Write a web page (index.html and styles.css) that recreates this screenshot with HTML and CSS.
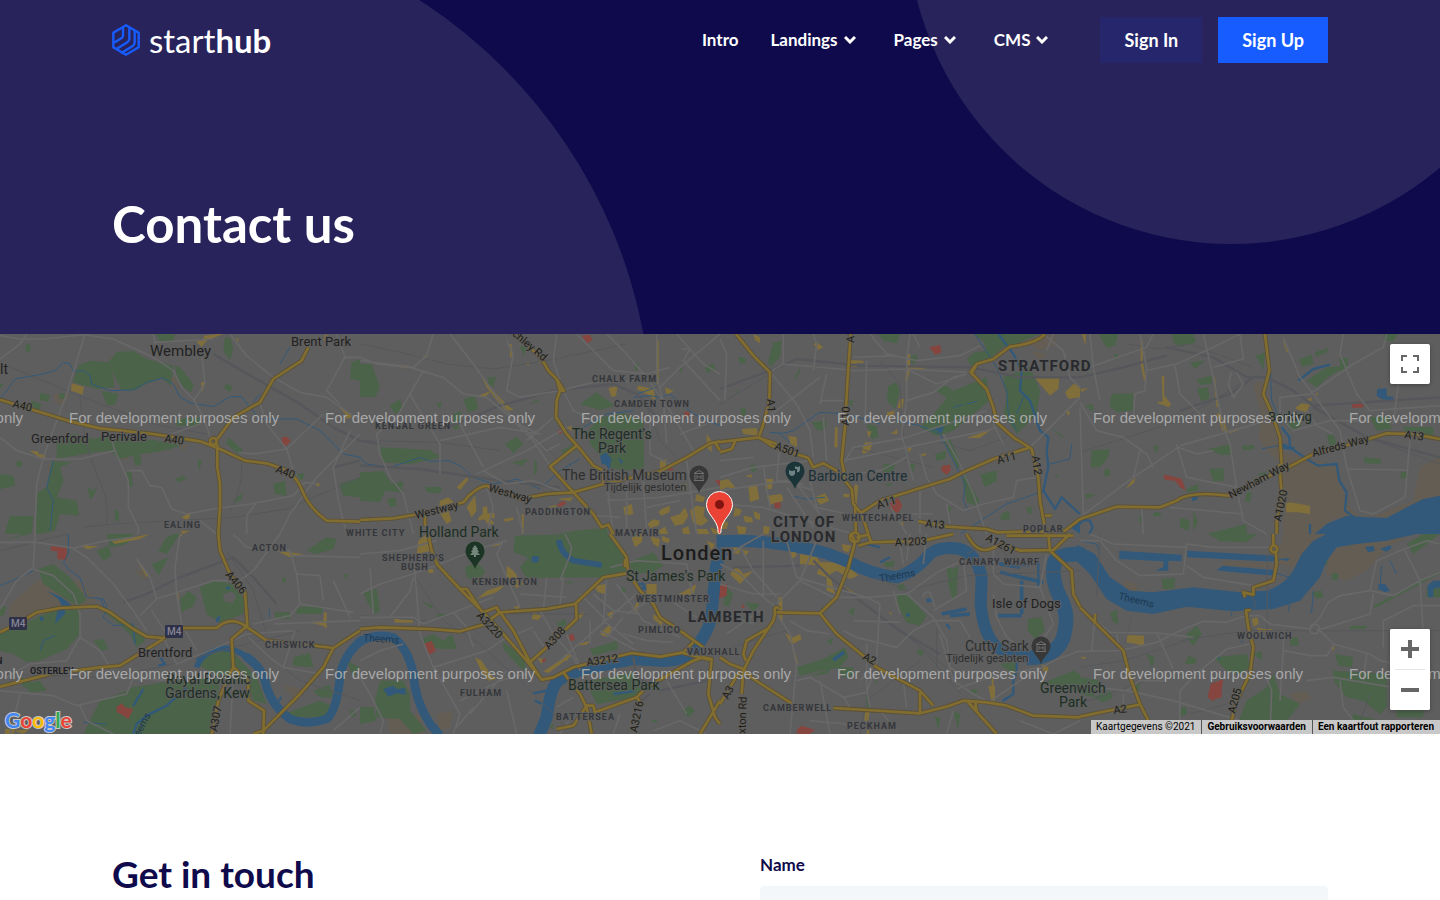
FILE: index.html
```html
<!DOCTYPE html>
<html lang="en">
<head>
    <meta charset="UTF-8">
    <meta name="viewport" content="width=device-width, initial-scale=1.0">
    <title>Contact us - Starthub</title>
    <link rel="stylesheet" href="styles.css">
</head>
<body>
    <div class="hero">
        <svg class="hero-shapes" viewBox="0 0 1440 334" preserveAspectRatio="xMidYMin slice" aria-hidden="true">
            <circle cx="144" cy="427" r="508"/>
            <circle cx="1231" cy="-80" r="324"/>
        </svg>
        <header class="container navbar">
            <a class="logo" href="#">
                <svg width="28" height="32" viewBox="0 0 84 96" fill="none" stroke="#175cff" stroke-width="7" aria-hidden="true">
                    <path d="M42 4 L80 26 V70 L42 92 L4 70 V26Z"/>
                    <path d="M33 8 V35 Q33 39 29 42 L6 56 M52 8 V44 Q52 51 46 55 L12 76 M68 18 V56 Q68 62 62 66 L27 88"/>
                </svg>
                <span class="logo-text">start<b>hub</b></span>
            </a>
            <nav>
                <a href="#">Intro</a>
                <a href="#">Landings <svg class="chevron" viewBox="0 0 12 8" aria-hidden="true"><path d="M1 1 L6 6 L11 1"/></svg></a>
                <a href="#">Pages <svg class="chevron" viewBox="0 0 12 8" aria-hidden="true"><path d="M1 1 L6 6 L11 1"/></svg></a>
                <a href="#">CMS <svg class="chevron" viewBox="0 0 12 8" aria-hidden="true"><path d="M1 1 L6 6 L11 1"/></svg></a>
            </nav>
            <div class="actions">
                <a class="btn" href="#">Sign In</a>
                <a class="btn btn-primary" href="#">Sign Up</a>
            </div>
        </header>
        <div class="container title">
            <h1>Contact us</h1>
        </div>
    </div>

    <section class="map">
        <svg class="map-canvas" viewBox="0 0 1440 400" preserveAspectRatio="xMidYMid slice">
            <defs>
                <!-- main roads, drawn twice: casing and then fill -->
                <g id="main-roads" transform="scale(.33333)">
                    <path d="M0 197 L90 225 L210 262 L300 283 L460 300 L600 322 L660 345 L735 380 L800 388 L850 405 Q885 420 905 465 Q925 520 980 560 L1080 563 M925 40 L905 80 L820 135 L780 205 L700 250 L652 315 M652 330 L652 400 L660 450 L660 520 L655 600 M630 322 a10 10 0 1 0 20 0 a10 10 0 1 0 -20 0"/>
                    <path transform="translate(1080 0)" d="M450 -20 L545 75 L565 110 L590 135 L600 170 L590 200 L588 250 L620 300 L660 345 L700 395 L730 410 V450 L640 475 L560 480 L480 495 L380 455 Q345 460 310 505 L180 540 L100 553 L0 558 M650 335 L570 398 L640 475 L700 540 L725 580 L745 572 L760 600 M590 135 L612 170 H600 M730 450 L900 412 L980 370 L1050 328 L1080 322 M195 545 V575 M1065 325 L1080 350"/>
                    <path transform="translate(2160 0)" d="M48 0 L100 65 L150 115 L148 200 L130 270 L118 305 M0 324 L118 310 L155 335 L265 372 L280 400 L310 388 L350 410 L395 465 L400 510 L425 540 L445 600 M118 312 L170 330 M392 0 L382 150 L375 280 L365 380 L375 430 M405 510 L408 600 M425 535 L480 500 L640 450 L690 435 L740 410 L820 375 L925 342 M975 0 Q950 28 870 38 L820 75 L770 90 L755 118 L800 165 L820 220 L830 265 L880 310 L935 345 L955 430 L960 500 L978 600 M750 118 L765 95 M595 562 L680 578 L800 585 L830 595 L1035 590 L1080 555 M0 355 L35 345 L45 322 M975 545 H995"/>
                    <path transform="translate(3240 0)" d="M555 0 L568 110 L550 180 L580 250 L600 310 L605 390 L615 405 L700 360 L850 320 L920 298 L1000 300 L1080 315 M0 555 L110 518 L240 520 L290 500 Q330 470 445 485 L560 430 L615 400 M598 390 L605 480 L590 560 V600"/>
                    <path transform="translate(0 600)" d="M0 295 L60 265 L110 235 L180 222 L290 217 L330 235 L400 285 L440 308 L490 312 L550 282 H650 Q690 245 735 275 L800 320 L900 330 L1000 342 L1080 290 M0 458 L160 418 L300 400 L360 395 L400 370 L490 315 M655 0 L660 50 L690 120 L735 175 L742 275 L695 315 L700 400 L745 440 V500 L792 530 L790 600 M700 400 L680 440 L655 500 L635 600 M1000 342 L970 400 L900 480 L790 590 L760 600"/>
                    <path transform="translate(1080 600)" d="M205 0 L215 50 L232 92 L300 165 L370 235 L410 220 L420 240 M300 165 L320 165 L365 232 M0 285 L60 280 L210 285 L300 292 L370 272 L420 235 L560 225 L645 210 L730 130 L800 118 M420 235 L460 290 L510 385 L545 437 M370 235 L430 300 L500 380 L545 437 L580 430 L640 400 L740 375 L815 357 L900 368 L970 355 L1000 325 M510 385 L560 340 L650 255 L648 210 M750 0 L800 70 L805 118 L840 170 L880 210 L900 250 L960 290 L1030 340 M795 100 V75 M610 415 L660 480 L680 520 L695 600 M590 585 L640 575 L680 515 H700 L705 535 L830 490 L860 460 L1000 380 L1030 370 L1055 375 L1045 480 L1065 550 L1080 570 M1080 500 L1020 600 M830 490 L850 515 M960 355 L1050 378"/>
                    <path transform="translate(2160 600)" d="M395 0 L405 25 L385 100 L350 190 L300 238 L170 235 M180 225 Q160 210 165 240 L160 260 L100 350 L70 410 L65 480 M300 238 L350 300 L430 365 L470 400 L600 470 L640 515 M600 475 V535 M150 280 L80 320 L70 360 L78 380 M0 370 L30 390 L70 405 L100 435 L215 508 M0 510 L60 410 M340 522 L440 528 L600 538 L680 518 L730 500 L800 505 L860 515 L940 545 L1080 550 M740 500 L830 600 M745 505 L770 530 L765 500 M390 10 a14 14 0 1 0 28 0 a14 14 0 1 0 -28 0 M415 35 L450 25 L610 20 L700 0 M410 10 L445 2 L455 28 M740 0 Q770 60 810 45 L850 30 L900 50 L1000 48 L1050 0 M985 0 L990 50 L1055 110 L1060 180 L1080 218 M860 5 L1060 5"/>
                    <path transform="translate(3240 600)" d="M580 0 V35 M572 45 a10 10 0 1 0 20 0 a10 10 0 1 0 -20 0 M588 55 L590 90 L580 140 L520 160 V182 L490 175 L495 190 M512 228 L498 230 L505 280 L520 340 L510 420 L470 500 L445 600 M0 220 L60 280 L130 350 L150 430 L180 510 L205 560 L195 600 M0 548 L110 525 L180 512 M45 240 V270"/>
                </g>
                <path id="poi" d="M0 17 C-2 10 -9.500 6 -9.500 -1 A9.500 9.500 0 0 1 9.500 -1 C9.500 6 2 10 0 17Z"/>
                <path id="museum" fill="none" stroke="#707070" d="M-5 -2.500 L0 -5.500 L5 -2.500Z M-4 -1.500 V4 M4 -1.500 V4 M-5 4.500 H5 M-2 3 V-.500 L0 1.500 L2 -.500 V3"/>
            </defs>

            <rect width="1440" height="400" fill="#5e5e5e"/>

            <g transform="scale(.33333)">
                <!-- Wembley -->
                <g>
                    <path class="soil" d="M330 70 L355 95 L370 130 L350 140 L335 110Z M160 180 L210 180 L190 215 L165 205Z M370 345 L385 350 L380 380 L368 375Z M510 125 L530 130 L540 165 L515 150Z M530 335 L560 330 L555 350Z M140 390 l15 0 -5 30z"/>
                    <path class="park" d="M235 95 L270 80 L325 85 L350 55 L400 50 L440 75 L520 95 L512 155 L485 133 L440 150 L400 170 L365 168 L340 120 L330 85 L345 160 L290 165 L218 145Z M305 170 L355 180 L345 213 L320 212Z M465 0 H525 L520 25 L480 20Z M675 10 L690 12 L700 40 L690 78 L670 50Z M525 92 L545 105 L580 150 L575 175 L550 160 L530 130Z M680 148 L698 160 L690 175 L672 160Z M1055 85 L1080 75 V140 L1050 135Z M170 310 L230 300 L280 315 L340 300 L500 325 L545 335 L470 355 L420 360 L425 390 L405 395 L400 365 L360 375 L330 350 L280 355 L170 375Z M155 380 L215 385 L180 400 L190 440 L170 490 L230 500 L238 545 L180 540 L165 590 L120 600 H105 L108 480 L140 460Z M30 545 L100 545 L95 600 H15Z M0 420 L40 425 L45 455 L0 465Z M380 410 L395 415 L398 458 L385 455Z M263 460 L280 470 L292 455 L285 480 L270 497Z M345 525 L355 530 L358 560 L345 560Z M592 378 L605 380 L598 412Z M522 432 L540 432 L545 422 L558 435 L535 445Z M820 450 L855 440 L860 485 L825 480Z M1018 450 L1080 430 V490 L1030 485Z M685 310 L730 350 L715 360 L680 330Z M530 255 L600 250 V275 H530Z M95 200 L125 210 L115 235 L80 225Z M120 178 l30 5 -5 20 -25 -5z M178 178 h16 v16 h-16z M78 30 L92 32 L88 55 L76 50Z M50 378 l18 5 -8 18 -12 -6z M700 500 l28 -25 -3 20 -20 12z M885 420 l28 -2 -5 20 -18 -4z M0 150 l12 0 -12 15z"/>
                    <path class="shops" d="M215 148 L252 158 L248 182 L213 170Z M88 350 L112 352 L118 362 L136 360 V378 L118 372 L108 362Z M588 22 L608 20 L612 5 L650 0 H670 L640 12 L620 20 L605 38Z M708 15 l8 -4 -2 12z M1018 220 L1036 230 L1055 240 V250 L1040 255 L1036 240Z M545 550 l25 -15 v15 l-10 10z M540 590 h30 l-20 10z M603 145 h12 l-8 30z M975 0 l15 10 -20 12z M950 448 h8 v8 h-8z"/>
                    <path class="hospital" d="M845 310 L860 308 L872 320 L860 335 L846 333Z"/>
                    <path class="stream" d="M0 195 L20 170 L45 135 L130 120 L165 110 L190 85 L210 90 L220 112 L250 110 L270 125 L275 150 L330 170 L400 168 L440 145 L490 132 L520 150 L540 190 L575 208 L640 218 L690 188 L725 188 L745 215 L780 255 L890 255 L960 290 L1030 360 L1080 370 M160 380 L140 460 L160 500 L150 590 M760 205 L780 180 M840 90 L870 40"/>
                    <path class="rail" d="M20 95 L250 190 L460 270 L620 300 M250 580 L340 570 L700 550 L860 525 L1080 430 M240 190 Q250 330 290 420 Q330 500 320 570 M725 390 Q730 460 690 530"/>
                    <path class="rail wide" d="M640 60 L760 130 L900 210 L1000 280 L1080 320 M1000 400 L1080 380"/>
                    <path class="street" d="M0 75 L60 30 L80 0 M0 5 L60 15 L130 15 L250 2 L340 15 L460 70 L520 110 L545 160 L580 195 L610 250 L635 320 M255 0 L200 180 L130 370 L110 450 L105 600 M0 310 L50 350 L130 375 L240 375 L345 350 L330 300 M460 0 L475 60 M460 25 L640 15 M605 60 L615 150 L580 200 M690 0 L740 65 L820 130 L900 175 L980 190 L1080 260 M1010 0 L1035 70 L980 170 L1020 210 M1080 70 L1030 70 M780 210 L800 270 L860 345 L880 410 L905 450 M715 355 L760 360 L860 345 L970 240 M345 350 L385 440 V520 L415 580 V600 M380 410 H425 L450 455 L485 460 L515 525 L560 540 L640 525 L750 510 L880 485 L915 445 L950 450 M1050 290 L1000 400 L1015 500 L1040 600 M1080 300 L950 430 L870 540 L840 600 M770 505 L740 545 V600 M600 560 L650 600 M515 300 L600 270"/>
                </g>
                <!-- Regent's Park -->
                <g transform="translate(1080 0)">
                    <path class="park" d="M0 90 L35 90 L60 160 L45 190 L0 188Z M90 215 L120 195 L128 225 L105 240Z M310 195 L345 185 L355 225 L325 235Z M60 340 L210 348 L245 370 L200 380 L150 390 L65 385Z M0 415 L70 412 L95 450 L130 440 L125 475 L75 470 L60 505 L0 500Z M435 330 L470 308 L490 330 L460 358Z M660 210 L710 175 L765 215 L720 228Z M685 290 L720 250 L790 238 L850 260 L852 405 L790 410 L750 400 L725 370 L690 330Z M605 350 L640 330 L650 345 L612 370Z M385 130 L408 128 L400 158 L385 150Z M1035 95 L1060 90 L1068 105 L1040 118Z M590 600 L660 588 L740 582 L745 600Z M80 495 l25 -5 5 25 -20 5z M480 35 L500 40 L490 65Z M195 460 L245 458 L240 478 L200 475Z M280 240 l25 -10 -10 55 h-15z M228 210 l18 -5 -5 20z M825 90 l12 -3 -2 22 h-10z M500 215 l35 -20 0 6z M455 385 l50 -10 -20 20z M522 380 h8 v40 h-8z M955 110 l15 -15 -5 20z"/>
                    <path class="shops" d="M362 122 L395 165 L440 212 L462 228 L435 230 L380 160Z M745 162 L773 157 L768 185 L755 190Z M240 500 L265 490 L280 505 L275 520 L265 530 L275 560 L260 570 L235 530Z M320 520 L345 485 L350 530 L335 550Z M368 518 h14 v20 h22 v15 h-14 l14 15 -18 6 -12 -18 -18 4 -2 -8 14 -12z M290 460 L320 430 L325 438 L300 468Z M862 570 L880 556 L900 560 L895 575 L870 582Z M905 525 L930 515 L928 535 L905 545 L895 535Z M930 550 L960 540 L975 520 L985 545 L970 570 L945 575Z M990 530 L1010 515 L1035 520 L1030 545 L1045 560 L1025 575 L1000 568Z M895 590 L915 578 L925 600 H900Z M965 585 l20 -8 5 23 h-20z M1010 585 l30 0 10 15 h-35z M1050 580 l30 10 v10 h-20z M1010 480 L1035 490 L1030 505 L1005 500Z M790 520 L815 510 L820 540 L795 545Z M835 155 L880 165 L890 210 L870 185 L830 165Z M915 160 l25 10 -20 15z M890 20 h6 v130 h-6z M1040 300 l15 20 v35 l-15 -15z M900 380 l20 -5 -5 40 -15 -5z M590 495 l50 -5 -10 12z M560 520 l30 -8 -5 10z M120 96 l25 -2 -15 10z M190 65 h15 l-10 8z M355 185 l40 -15 -20 18z M495 90 l12 -5 v10z M450 30 h5 v40 h-5z M535 82 l10 0 -5 8z M485 540 h6 v60 h-6z M430 555 l30 -5 0 8 -25 5z M840 585 h20 v15 h-20z M620 280 l15 -5 v18z M960 450 l20 0 0 20 -15 0z"/>
                    <path class="hospital" d="M665 5 L690 2 L697 18 L682 28Z M592 288 l12 -2 3 10 -10 5z M590 512 l20 -12 10 8 -20 12z M1065 438 h15 v20z M972 235 l14 -3 3 12 -14 6z M925 405 l14 -3 0 6 -14 4z"/>
                    <path class="stream" d="M0 370 L20 390 L90 400 L180 370 L210 382 L265 380 L300 395 L340 430 L400 450 L470 435 L540 465 M550 455 L600 410 L660 375 M670 280 L740 240 L820 230 M820 190 L870 185 L900 190 L930 180 L1000 240 L1080 275 M830 180 l60 -20"/>
                    <path class="water" d="M720 365 L738 355 L755 375 L748 410 L738 392 L725 390Z M775 370 l15 15 -8 5z"/>
                    <path class="rail" d="M0 30 L100 50 L260 90 L400 105 L560 80 L800 30 M0 320 L240 325 L420 350 M440 230 L600 380 M850 190 L900 320 L980 400"/>
                    <path class="rail wide" d="M0 320 L60 330 M240 290 L420 215 L580 170 L760 150 L830 180 L890 250 M0 395 L180 405 L420 440 L600 460"/>
                    <path class="street" d="M0 70 L50 90 L150 100 L250 130 L310 180 L380 190 L440 240 L520 320 L570 395 M220 0 L200 65 L160 100 L0 80 M190 110 L150 180 L190 250 L240 330 V420 M150 180 L110 250 L50 300 L60 360 L90 430 L130 480 L160 600 M270 0 L340 90 L440 230 L560 350 M440 20 L460 60 L440 170 L480 190 L600 170 L700 145 L860 140 M590 0 L580 80 L600 140 M650 0 L760 110 L860 120 L930 100 M740 0 L800 60 L860 130 L930 230 L1000 350 M1080 0 L960 100 L900 160 M350 420 L500 350 L620 280 M240 320 L420 280 L540 300 L470 270 M370 410 L440 450 L520 440 L600 470 M610 170 L640 230 L700 260 M870 240 V360 L930 390 M950 0 L1030 90 L1080 120 M800 440 V600 M740 500 L900 490 L1080 460 M740 450 L760 600 M850 440 L860 600 M380 460 L400 520 L380 600 M470 520 L490 600 M890 0 V130 L910 200 L920 330 M965 45 H990 L970 80 L1080 200 M300 270 L370 400 M560 350 L600 330 M500 320 L580 250 M960 300 L1040 270 M640 540 L780 550 M860 520 L960 500 M980 380 L1010 600"/>
                </g>
                <!-- Hackney and Stratford -->
                <g transform="translate(2160 0)">
                    <path class="soil" d="M910 20 L1000 0 L1010 30 L960 50Z M930 50 L980 60 L960 80Z"/>
                    <path class="park" d="M700 170 L800 130 L808 200 L760 240 L700 290 L650 305 L600 280 L640 240Z M765 55 L800 50 L850 40 L790 90 L755 100 L740 75Z M850 130 L930 100 L960 170 L950 240 L910 280 L890 300 L850 240 L860 190Z M760 0 H960 L900 25 L870 35 L800 50 L790 20Z M475 0 H540 L530 28 L490 20Z M505 155 L530 145 L540 175 L525 225 L500 200Z M645 165 L680 155 L705 175 L690 200Z M275 265 L320 260 L315 290 L290 288Z M440 270 L470 275 L475 310 L455 315Z M490 390 L525 390 L520 420 L490 415Z M570 390 h15 l-5 25 -10 -5z M645 360 L680 350 L675 375 L650 380Z M780 420 L830 410 V440 L795 460Z M735 410 L750 450 L778 500 L770 515 L740 505 L728 440Z M670 320 L690 315 L720 380 L715 405Z M160 25 L185 22 L180 70 L150 100 L145 80Z M55 70 h20 l3 15 -18 5z M845 540 L865 530 L872 555 L840 560Z M220 140 l20 -40 -2 20z M680 515 l15 5 -10 25z M920 520 l15 -2 0 18 -12 4z M85 400 l18 -10 10 15 -15 10z M990 280 l40 25 -3 5z M570 70 l20 -10 0 25 -15 5z M60 225 l15 -5 5 20 -15 8z M45 170 l8 0 0 12z M385 200 l15 0 -5 20z M1005 425 l10 0 -3 8z M495 450 l22 -2 -8 10z"/>
                    <path class="shops" d="M945 132 L1018 132 L1015 165 L990 185Z M1035 175 L1060 150 L1080 155 V190 L1045 195Z M388 78 L430 80 L432 86 L405 88 L412 100 L388 96Z M560 60 h10 v35 l50 8 -50 5 -8 34 h-6z M540 195 h12 l-5 30 -15 -5z M65 285 L110 282 L115 305 L70 300Z M205 305 L230 310 L232 340 L212 330Z M345 280 h8 v60 h-10z M425 350 L435 325 L458 325 L450 350 L430 360Z M85 455 L110 450 L118 495 L90 505Z M135 435 h25 l-5 30 h-20z M140 485 L185 480 L190 500 L150 512Z M285 490 L315 478 L328 500 L300 512Z M0 440 l25 -5 25 30 -30 -5 -20 10z M45 520 l20 8 -5 15 -20 5z M70 545 l25 5 5 15 -25 0z M100 530 l20 10 0 18 -15 -5z M50 575 l30 5 -5 20 h-20z M130 575 l20 5 -5 20 h-15z M5 560 l20 5 -5 20 h-15z M395 480 l10 -30 10 5 -5 55 -15 0z M370 480 l18 0 0 10 -18 0z M740 312 L815 285 L780 312Z M280 30 l10 -5 20 15 -15 8z M1035 225 l15 10 -5 12z M500 235 l25 -5 -8 20 -15 -5z M440 292 l15 0 -8 20z M512 300 l20 -15 0 15z M560 345 l15 -5 -5 15z M75 425 l20 -4 0 10z M595 362 l25 -6 -5 10z M100 0 l20 10 0 18 -15 -10z M540 565 h10 v12z"/>
                    <path class="hospital" d="M628 40 L660 32 L665 55 L645 62Z M665 395 L690 392 L692 410 L680 423 L665 412Z M505 510 L535 492 L547 515 L535 538 L508 525Z M162 508 l20 -5 v20 l-18 0z"/>
                    <path class="stream" d="M150 295 L190 298 L220 290 L300 235 L380 240 L480 270 M530 260 L600 275 L660 300 L700 380 L735 450 L730 500 L745 530 M720 600 L860 510 L975 470 M765 0 L830 100 L860 170 L865 240 L890 290 M990 390 L1050 375 L1055 330 M890 240 L910 190 M215 485 l40 10 60 -5 M180 300 l30 25 M700 220 l30 -8 M740 210 l30 -8"/>
                    <path class="stream wide" d="M835 0 L880 60 L905 110 L900 170 L930 200 L960 290 L985 310 L980 350 L985 400 L970 470 L1005 525 L1025 490 L1080 540"/>
                    <path class="water" d="M640 285 L672 278 L665 298Z M1050 580 l30 -20 0 40z"/>
                    <path class="rail" d="M480 80 L540 150 L545 250 L560 380 M400 340 L640 400 M0 210 L150 120 M640 320 L750 350 L860 310"/>
                    <path class="rail wide" d="M0 165 L150 110 L230 75 L420 95 L750 100 L900 130 L1080 130"/>
                    <path class="street" d="M0 15 L20 60 L15 200 M190 0 V90 L155 110 M190 90 L410 110 L560 105 L740 115 M155 120 L230 210 L270 290 L280 370 M130 260 L300 130 M300 200 H370 M320 120 L300 210 M310 250 L320 380 M440 80 L435 270 M450 0 L500 60 L590 80 L720 65 L780 35 M580 0 L600 40 M570 0 L560 80 V200 L545 300 L560 360 L580 440 M560 200 L640 175 L700 130 L740 120 M370 390 L400 340 L560 310 L650 280 L800 230 M370 380 L560 340 L800 290 L830 280 M600 360 L620 430 L650 480 L730 530 L790 510 L880 490 L890 440 L950 430 M670 300 L720 390 L760 480 L800 600 M930 340 L1080 190 M970 0 L1030 50 L1050 130 L1080 160 M820 270 L850 330 M430 540 L640 540 M400 420 L480 410 L560 370 M0 380 L100 370 M130 400 L150 520 M0 470 L200 440 L280 470 M200 460 L280 580 M600 470 V600 M680 510 L690 570 M0 510 L130 520 L260 560 L400 600 M280 0 L290 30 L280 110 M400 70 L530 65 M560 105 L650 150 L740 120 M500 500 L560 600 M180 330 L170 440 L250 450 M230 450 L300 540 M270 440 L290 520 L380 540 M0 430 L100 400 L270 380 M1000 0 L980 50"/>
                </g>
                <!-- Barking -->
                <g transform="translate(3240 0)">
                    <path class="soil" d="M520 150 L550 140 L555 200 L580 260 L600 350 L680 375 L770 395 L800 510 L850 560 L1000 500 L1020 400 L1080 370 V485 L990 520 L920 550 L820 545 L760 555 L700 600 H610 L605 390 L560 350 L535 310 L545 250Z"/>
                    <path class="park" d="M55 0 H115 L105 35 L80 42Z M275 0 H340 L348 25 L300 38 L280 25Z M525 65 L555 55 L550 110 L540 85Z M330 85 L375 80 L345 105Z M350 135 L395 125 V150 L360 152Z M350 165 L385 160 L388 195 L365 202Z M95 180 L160 178 L158 230 L110 235 L88 215Z M35 350 L88 345 L85 370 L60 400 L32 400Z M385 345 L450 330 L458 362 L420 362Z M485 335 l38 -3 v14 l-35 2z M388 405 L430 402 L432 440 L400 442Z M218 338 l18 -5 -8 25z M658 75 L695 62 L700 90 L665 98Z M680 140 L740 100 L800 95 L745 130 L710 160Z M705 55 L745 42 L740 55 L708 68Z M778 75 l25 -5 v25 l-20 25z M910 0 H955 L940 22 L912 20Z M870 250 L925 245 L935 285 L890 290Z M970 278 L1060 280 V305 H980Z M852 370 L902 375 V390 L855 388Z M962 413 h22 v20 h-22z M740 305 l20 -5 10 30 -20 5z M535 420 L565 410 L540 435Z M320 465 l35 -15 v20 l-35 5z M220 535 h22 v12 h-22z M340 530 l15 35 -15 25z M380 600 L500 570 V600Z M15 480 l35 0 -30 15z M15 215 l25 -5 v25z M500 475 h15 l-5 30 -15 -5z M300 550 l30 10 -5 30 -25 -10z M100 60 l15 0 -5 20z M75 405 l15 0 0 20 -20 0z M620 270 l50 -20 -10 30 -30 10z M178 545 h10 v20 h-10z"/>
                    <path class="shops" d="M615 510 L630 505 L690 515 V540 L655 535 L620 535Z M645 222 L665 208 L690 212 L680 235 L655 228Z M675 200 l20 -10 0 10z M705 185 l8 -12 0 10z M182 20 h6 v60 l10 60 h-6 l-10 -50z M245 125 h8 v60 l20 25 -5 10 -35 -12 v-5 h15z M400 130 l5 0 10 90 h-5z M410 240 l12 -5 15 40 5 20 -15 -5z M605 10 l20 45 -5 0z M5 0 h12 v35z M155 440 l12 -8 -5 15 -25 18z M0 165 l25 -3 -20 12z M440 290 l40 -3 -30 10z"/>
                    <path class="hospital" d="M250 422 L270 425 L305 434 L318 470 L300 460 L285 440 L255 438Z M815 212 L832 202 L845 203 L852 220 L818 222Z"/>
                    <path class="water" d="M705 600 L740 570 L800 545 L860 550 L920 552 L980 520 L1030 495 L1080 485 V600Z M892 165 L920 163 V187 L940 188 V202 L905 195 L890 185Z M335 490 l18 -5 0 10 -15 8z M605 330 L645 340 L640 348 L610 345Z"/>
                    <path class="stream wide" d="M655 140 L700 105 L750 92 M605 280 L628 310 L630 340 L680 375 L715 395 L770 390 L778 440 L800 475 L795 530 L820 548 M0 570 L10 558 L30 560 L38 580 L28 600 M690 570 V600"/>
                    <path class="stream" d="M565 50 L572 120 L575 200 L605 270 M545 345 L620 330"/>
                    <path class="rail" d="M0 355 L110 320 L300 260 L480 150 M140 30 L240 45 L330 30 L520 100 M860 310 L1080 390"/>
                    <path class="rail wide" d="M0 130 L130 100 L260 65 M260 40 L400 70 L500 130 L560 130 L640 170 L700 215 L1080 190 M700 220 L860 310 L1080 370 M300 230 L450 180 L520 130"/>
                    <path class="street" d="M0 110 L200 40 L220 0 M180 0 L200 100 L195 170 L165 180 L160 260 M0 205 L50 290 L130 310 L200 360 L220 400 M30 0 L40 100 L60 200 M370 0 L400 130 L430 280 L450 330 L470 460 L490 560 L560 600 M200 110 L290 90 L400 40 L480 0 M480 0 L490 75 L400 100 M285 95 L300 180 L370 250 M300 335 L440 295 L560 260 M0 550 L160 430 L295 340 L350 360 L400 350 M270 520 L490 540 M290 330 L320 430 L470 460 M180 350 L160 430 M600 250 L600 190 L690 180 L820 90 L910 40 L920 0 M610 10 L660 130 L700 180 L780 290 L800 400 L840 530 L880 540 L975 490 L990 320 M790 0 L780 60 L830 180 L870 230 L1080 215 M800 405 L985 408 M955 150 L940 270 M620 270 L640 290 L750 260 L860 260 M185 520 L190 600 M0 220 L10 550 M455 115 L445 150 L460 190 L490 150 L470 115 M680 230 L710 275 L760 300"/>
                </g>
                <!-- Brentford and Kew -->
                <g transform="translate(0 600)">
                    <path class="soil" d="M30 210 L120 135 L240 140 L290 200 L245 220 L120 230 L60 260 L25 250Z M850 455 l60 10 -20 40z M400 110 l30 0 10 30z"/>
                    <path class="park" d="M475 50 L500 10 L520 0 H540 L500 60Z M290 50 l35 -15 10 30 -25 15z M115 105 L160 90 L210 130 L250 180 L260 200 L230 215 L130 150Z M0 290 L80 265 L120 245 L160 230 L240 225 V300 L200 345 L120 380 L80 385 L40 360 L0 350Z M300 225 L340 235 L430 295 L435 320 L410 340 L390 300 L350 265Z M600 160 L640 140 L700 150 L735 200 L730 240 L660 265 L620 240Z M540 195 l25 -25 25 20 -10 25 -35 20z M590 390 L630 350 L690 345 L740 400 L770 430 L800 510 L760 500 L740 430 L690 440 L660 430Z M400 460 L520 440 L660 430 L650 520 L630 600 H250 L300 500 L380 470Z M800 500 L850 540 L960 500 L1000 520 L970 550 L870 550Z M880 370 L930 358 L940 400 L880 395Z M940 470 L990 452 L1000 490 L960 490Z M455 90 l50 -20 -30 55z M920 50 L980 10 L1010 15 L1000 45 L950 60Z M0 215 l20 5 -10 25 -10 0z M890 220 L970 215 L965 240 L890 240Z M280 320 l30 -5 15 30 -20 5z M825 235 h45 v20 h-45z M0 20 L90 0 H70Z M320 0 h80 l-20 30 -50 10z M1030 120 l15 0 -5 15z M845 130 l15 5 -10 15z M60 430 l30 5 10 20 -30 5z M70 450 l50 -10 20 30 -50 5z M300 520 l20 0 0 30 -20 5z M1050 530 l15 0 5 15 -20 5z M1040 380 l40 20 -20 30z"/>
                    <path fill="#5e5e5e" d="M670 180 l25 -8 15 15 -12 20 -28 -5z"/>
                    <path class="shops" d="M335 22 L390 12 L450 0 L420 15 L345 30Z M245 38 l15 -10 5 8 30 0 -30 10z M410 70 l8 15 27 40 -5 5 -20 -35z M925 265 L970 260 L972 235 L980 235 V285 L970 275Z M830 50 l80 10 -40 10z M15 585 h30 l-5 15 h-25z M40 590 l50 -5 -20 15z M528 180 l8 -4 0 25z M540 0 h6 v10z"/>
                    <path class="hospital" d="M153 36 L200 42 V78 L172 75 V52 L153 50Z M350 518 L365 508 L375 520 L400 525 L385 555 L362 540 L350 535Z"/>
                    <path class="thames narrow" d="M590 400 Q600 365 640 350 Q690 330 740 370 Q790 400 800 460"/>
                    <path class="thames" d="M735 366 Q790 400 800 460 Q820 520 870 555 Q920 575 980 555 Q1010 530 1020 430 Q1030 360 1090 315"/>
                    <path class="stream wide" d="M400 600 L410 570 L440 545 L500 515 L560 460 M400 515 L430 465 M590 380 L610 360 M480 370 l15 20 -20 5"/>
                    <path class="stream" d="M205 0 L205 60 L190 85 L210 110 L240 130 L260 190 L310 195 L320 215 L310 250 L340 275 L400 270 L405 330 L400 290 M120 350 L130 320 L165 305 M0 155 L60 130 L100 110 M250 565 L320 570 M290 190 L305 200 L320 240 M808 225 v25"/>
                    <path class="water" d="M140 170 L185 190 L215 212 L195 220 L195 240 L165 270 L172 230 L190 225 L175 195Z M650 250 l12 -5 -5 18 -10 2z M835 495 l10 -10 0 10 -10 12z M120 248 h10 v12 h-10z M90 565 h10 v12 h-10z M678 158 h12 v8 h-12z"/>
                    <path class="rail" d="M0 50 L200 0 M20 420 L300 430 L480 400 L700 340 L900 290 M680 50 L760 170 L800 300 M740 310 L900 440 L1080 500"/>
                    <path class="rail wide" d="M370 205 L440 180 L540 130 L700 70 L760 130 L830 210"/>
                    <path class="street" d="M0 25 L110 25 L220 42 L320 20 L400 10 M105 0 L100 100 L50 140 L0 225 M100 105 L160 125 L220 180 L240 240 V310 L300 350 L350 430 L520 440 M220 45 L260 70 L340 150 L400 230 L440 290 M410 75 L450 130 L470 195 M540 0 L525 100 L530 180 L545 270 L590 350 M420 245 L470 195 L640 140 L720 140 L760 110 L840 0 M700 0 L740 40 L870 50 L890 120 L960 125 L970 200 M870 65 L1080 70 M890 120 L900 210 L870 245 L760 270 M820 270 L1080 260 M0 470 L160 485 L230 515 L380 480 L400 430 M20 430 L90 390 L200 380 L240 310 M490 310 L530 390 L640 345 L740 300 L880 290 M745 310 L810 370 L850 400 L960 420 M850 400 L885 290 M690 600 L700 420 M60 480 L30 600 M240 515 L260 560 L340 600 M455 230 L500 300 M900 210 L1060 235 M1000 140 L1050 250 M1080 520 L1000 590"/>
                </g>
                <!-- Kensington and Battersea -->
                <g transform="translate(1080 600)">
                    <path class="soil" d="M80 550 L180 540 L190 600 H90Z M230 540 l50 -10 -10 50 -30 10z"/>
                    <path class="park" d="M465 5 L660 0 H740 L795 60 L800 115 L730 130 L500 132 L480 100 L505 70 L460 55Z M315 100 L350 85 L375 110 L355 145 L320 130Z M10 175 L50 165 L60 230 L45 240 L25 210Z M430 325 L490 365 L500 410 L480 400 L430 345Z M690 440 L820 415 L850 450 L830 490 L710 510 L690 470Z M805 85 L880 55 L910 95 L880 115 L820 120Z M60 440 L130 440 L150 480 V530 L200 590 L160 600 L120 555 L50 550 L45 500Z M180 318 L220 300 L250 320 L275 300 L292 345 L250 345 L215 340Z M180 200 l40 15 -5 8z M965 530 l25 -15 15 15 -20 20z M690 345 L770 320 L775 345 L700 365Z M0 520 L40 520 L50 560 L0 570Z M590 270 l25 -15 5 15 -20 15z M780 165 l10 -5 8 10 -10 10z M610 145 l25 -4 0 8z M230 240 h30 v8 h-30z M560 575 l20 -5 0 15z M875 560 l15 -5 0 15z"/>
                    <path class="shops" d="M175 20 L200 0 L215 50 L170 60Z M205 105 h15 v12 h-15z M440 95 L460 110 L490 150 L470 162 L440 130Z M520 235 L545 245 L535 258 L515 255Z M700 155 L740 150 L735 180 L715 175Z M720 300 L750 270 L755 295 L735 308Z M815 12 L835 0 H850 L845 25 L825 40Z M870 5 L900 15 L895 40 L880 30Z M905 5 l25 10 -5 12 -18 -5z M860 150 h30 v30 h-30z M880 240 l30 20 -5 15 -25 -20z M100 252 l30 5 30 -3 -2 12 h-52z M345 370 l20 10 30 45 15 10 -25 5 -20 -25z M650 240 l25 -5 -15 20z M940 190 L1010 150 L1000 180 L960 195Z M550 412 l80 -52 5 5 -70 52z M530 370 l20 5 -5 15z M615 360 h8 v20 h-8z M740 240 l20 -10 -5 25z M350 195 l30 -25 60 -20 -30 25z M390 40 l30 -15 0 8z M1040 20 l25 10 -10 20z M460 218 l20 -2 -5 15z M810 215 l10 10 20 -40 4 2 -15 50z M640 335 l50 -15 -10 12z"/>
                    <path class="hospital" d="M190 330 L215 320 L228 350 L208 362Z M625 305 L640 298 L645 318 L630 322Z M1070 160 L1080 155 V200Z M545 378 l10 -5 4 8 -10 5z"/>
                    <path class="thames" d="M-5 328 Q40 295 100 310 Q145 345 160 420 Q165 500 210 570 L240 605"/>
                    <path class="thames broad" d="M535 610 L560 550 Q570 470 590 445 Q620 415 720 395 L820 375 L900 380 Q960 385 1000 350 Q1050 290 1055 240 L1065 130 Q1065 80 1090 50"/>
                    <path class="thames narrow" d="M597 18 Q600 55 640 80 L725 93"/>
                    <path class="water" d="M515 70 q12 -10 22 0 q2 14 -12 16 q-12 0 -10 -16z M70 465 L100 455 L110 465 L135 462 L138 482 L110 478 L85 488Z"/>
                    <path class="stream wide" d="M830 160 L855 165 L850 150 L835 150 M760 480 L800 475 L825 470 M520 478 L560 470 M525 500 L545 510"/>
                    <path class="rail" d="M160 120 L250 260 L360 330 L480 440 L620 580 M0 245 L200 260 M420 240 L680 240 M720 180 L730 260 M650 380 L680 440"/>
                    <path class="rail wide" d="M820 370 L830 430 L900 470 L1040 440 M870 480 L820 520"/>
                    <path class="street" d="M0 180 L60 150 L160 120 L240 90 L340 50 L440 20 M160 60 L180 300 M280 235 L320 280 L340 340 M180 300 L220 400 L300 540 L280 600 M220 400 L380 350 L440 310 M430 20 L410 60 L440 130 L480 220 M560 130 L550 230 M610 130 L600 210 M615 0 L635 40 L630 65 L600 140 M540 230 L580 300 L640 370 L660 410 M520 290 L560 350 M470 300 L520 280 M620 300 L660 400 M600 380 L680 310 L760 240 L830 180 M740 140 L730 260 L820 330 M770 150 L850 260 L960 310 M790 300 L860 320 L940 325 M800 240 L900 180 M0 250 L160 250 L190 270 L400 190 M0 380 L60 350 L130 330 M0 430 L30 480 L70 560 L60 600 M440 470 L470 600 M300 500 L420 440 L500 420 M330 540 L440 410 M340 520 L290 580 M590 520 L640 490 M480 180 L620 190 M660 180 L740 260 M700 180 L760 230 L840 240 M750 100 L830 80 L980 90 L1000 200 M900 180 L1010 250 M880 590 L960 560 L1040 600 M920 440 L980 540 M640 540 L600 600 M780 540 L760 600 M690 260 L690 330 M720 290 L830 350 M740 310 L790 250 M0 60 L120 50 L230 20 M30 100 L40 240 M90 250 L150 170 L160 130"/>
                </g>
                <!-- South bank and Isle of Dogs -->
                <g transform="translate(2160 600)">
                    <path class="park" d="M530 185 L560 180 L620 245 L600 275 L560 265 L535 220Z M680 100 L700 105 L715 95 L710 180 L700 205 L685 150Z M925 255 L965 250 L975 290 L945 315 L922 290Z M230 400 L310 375 L375 340 L385 370 L360 400 L280 415 L240 425Z M960 450 L1060 410 L1080 420 V470 L1010 460Z M75 205 L120 210 L100 235Z M490 85 L525 82 L520 100 L495 98Z M385 230 l20 -10 -5 25z M590 350 l15 -5 8 15 -15 5z M645 550 l15 0 -5 40z M700 530 l20 10 -5 50z M435 470 l15 60 -5 15z M840 390 L890 380 L890 430Z M20 160 l20 20 -15 40 -15 -10z M530 155 l20 -5 8 15 -20 5z M460 440 l10 0 0 12z M270 425 l60 -20 -10 15z M745 470 l25 -5 0 15z M320 320 l20 -8 -5 20z M350 400 l50 0 0 25 -30 5z"/>
                    <path class="shops" d="M240 60 L290 70 L300 85 L360 85 L400 110 L415 125 L390 135 L350 110 L330 120 L345 180 L320 170 L320 130 L290 120 L300 95 L240 90Z M365 30 L395 35 L385 55 L370 50Z M40 40 L60 42 L58 60 L42 58Z M68 48 l20 4 -12 14z M30 120 L50 95 L70 120 L100 110 L80 130 L60 150Z M360 150 l50 30 -20 -2z M195 298 L220 310 L240 300 L245 315 L215 332Z M175 190 h12 v70 h-8z M215 330 l15 40 5 20 -10 -10z M805 455 L825 455 V500 L815 505Z M435 530 l15 0 -5 30 h-12z M505 235 l10 0 0 8z M440 550 l8 50 -8 0z M965 390 l20 10 0 12 -15 0z M130 30 l10 -10 5 30z M210 60 l15 -20 5 25 -15 10z M815 430 h6 v25 h-6z"/>
                    <path class="hospital" d="M0 155 L22 150 L20 185 L0 192Z M232 585 L245 575 L285 588 L270 600 H230Z M65 213 h8 v8 h-8z"/>
                    <path class="thames broad" d="M-10 22 L60 20 Q200 25 320 58 L390 85 Q450 120 530 130 Q590 110 630 60 Q660 35 720 45 Q770 60 785 130 L782 210 Q790 300 830 340 Q900 375 970 370"/>
                    <path class="thames wide" d="M920 372 Q1010 370 1030 310 Q1050 240 1020 190 Q990 130 1005 80 Q1030 55 1090 62"/>
                    <path class="stream wide" d="M890 370 V410 L880 440 L880 480 L850 500 L860 490 M835 88 L930 95 M955 75 V155 M480 85 L510 70 M440 30 l40 10 M680 270 l10 15"/>
                    <path class="docks" d="M665 240 L740 225 M690 245 L750 240 M840 115 L970 145 M840 90 L900 100 M905 140 V240 M835 245 L905 245 M340 378 L372 355 M620 200 L635 198 M560 240 L568 245"/>
                    <path class="rail" d="M470 130 L560 170 L740 125 L1080 110 M740 60 L820 20 L900 110 M560 300 L640 380 L720 480 M400 180 L480 250 L620 350 L700 420 M650 280 V400 M420 600 L440 500 L600 380 M0 350 L200 290"/>
                    <path class="rail wide" d="M280 80 L330 130 L420 200 L540 290 L660 360 M40 100 L240 95"/>
                    <path class="street" d="M0 90 L60 120 L130 190 L170 220 M20 70 L60 40 L130 0 M60 40 L100 110 L170 190 M130 20 V190 M170 210 L240 140 L290 20 M200 20 L230 130 L440 190 L560 180 L640 250 M240 140 L340 190 L440 190 L480 210 L470 370 M170 240 L210 300 L230 390 L210 600 M210 260 L260 290 L330 300 M370 290 L410 310 L530 340 L580 290 L640 260 L720 260 L750 310 M400 260 L540 265 M560 180 L660 110 L730 80 L740 170 L640 230 M610 190 Q610 170 630 175 L645 220 M640 250 L680 320 L690 400 L720 420 M420 440 L470 390 L470 370 M230 440 L270 430 L370 490 L390 520 M370 490 L440 475 L460 420 M710 465 L810 430 L960 400 M440 330 V470 L450 520 M660 300 L700 440 L760 480 L800 500 M820 0 V120 L850 150 L960 160 L980 60 M820 180 L830 250 L860 310 L900 340 M960 160 L1000 270 L960 330 M520 170 L540 240 M610 90 L620 0 M540 30 L550 90 M570 0 L560 80 M0 150 L100 180 L180 180 M270 560 L380 570 M300 440 L330 600 M480 530 L530 590 M550 440 L560 520 M700 530 L680 600 M800 510 L900 440 L1000 380 L1080 350 M900 560 L1000 600 L1080 560 M20 240 L100 270 M20 300 L120 230"/>
                </g>
                <!-- Woolwich -->
                <g transform="translate(3240 600)">
                    <path class="soil" d="M610 0 H740 L700 20 L665 60 L640 100 L590 90Z M770 40 L870 20 L980 10 L920 40 L860 110 L800 140 L740 120 L745 80Z M430 80 L580 90 V100 L430 95Z M625 480 l50 -10 20 20 -40 20z M130 140 l40 10 0 25 -30 -10z"/>
                    <path class="park" d="M245 135 L285 132 L283 165 L250 165Z M385 0 H530 L500 25 L420 22Z M315 305 L350 275 L365 300 L340 335Z M980 30 L1030 0 H1080 L1040 30 L1000 60Z M695 175 l30 -5 5 20 -20 5z M90 240 l20 -15 5 45 -15 -5z M200 360 l25 10 -10 30z M325 365 l25 10 -5 15 -30 0z M400 370 L500 360 L510 400 L480 420 L440 410Z M520 360 L545 350 L545 380Z M765 360 L820 370 L815 400 L775 395Z M760 410 L920 420 V520 L900 540 L850 500 L800 490 L760 440Z M500 500 L560 460 L580 420 L600 480 L660 510 L620 560 L560 600 H460 L480 550Z M950 530 h80 v20 h-80z M820 540 L900 560 L880 600 H800Z M860 450 h60 v60 h-40z M630 310 h25 v25 h-25z M150 450 l30 -5 -5 30z M755 120 q10 -8 20 0 v15 q-10 6 -20 0z M40 490 l50 -20 10 20 -30 15z M300 520 l20 0 0 20 -20 10z M880 215 L1080 110 V118 L885 222Z M810 275 h50 v10 h-50z M1040 160 h40 v30 h-40z M730 80 l15 0 -5 15z M0 430 L60 440 L40 490 L0 480Z"/>
                    <path class="shops" d="M138 303 L192 305 V336 L168 330 L140 325Z M515 255 l18 -5 3 20 -15 8z M530 280 l20 5 30 0 -25 10 -20 0z M755 335 h8 v12 h-8z M0 370 l18 -2 -5 8z M40 240 h8 v20 h-8z"/>
                    <path class="hospital" d="M392 450 L430 436 L425 465 L425 490 L405 495 L400 502 L383 490Z"/>
                    <path class="water" d="M-10 32 L45 60 L90 130 L150 170 L220 175 L340 160 L480 175 L560 170 Q610 155 640 110 L665 60 L700 20 L740 0 H1010 L920 20 L830 30 L770 40 L740 80 L720 130 L660 200 L580 225 L460 232 L320 218 L220 240 L140 230 L80 195 L30 120 L-10 82Z M118 50 L305 62 V82 L265 80 V110 H225 L250 100 V82 L118 75Z M322 50 L580 65 L600 80 L560 82 L322 70Z M410 108 L430 95 L580 108 L580 125 L430 112Z M895 150 h20 l15 20 -15 5 -20 -10z M1042 155 L1060 140 H1080 V160 L1060 165 V190 H1045Z M855 40 L880 35 L885 50 L865 55Z M900 45 l30 -12 5 10 -15 10z M590 75 l40 -2 -8 8z M480 320 l8 0 0 8z M412 370 l8 0 0 8z"/>
                    <path class="stream" d="M60 60 L50 30 L0 20 M700 170 L695 235 L690 235 M905 95 L900 160 M930 80 L950 120 M455 235 V245 M625 232 L630 200 M585 115 L625 130"/>
                    <path class="rail" d="M562 60 V290 M0 400 L130 380 L320 320 M300 320 L500 290 L1080 290 M155 250 L135 330 M50 190 L60 0 M830 590 L870 480 M0 510 L200 440 M330 540 L480 500 M515 190 q20 20 0 38"/>
                    <path class="street" d="M0 20 L60 20 L110 80 L180 125 L310 120 L320 30 L400 40 L600 40 M30 0 L100 30 L320 40 M320 95 L370 130 L520 155 M45 250 L35 350 M45 260 L90 295 L230 297 L340 310 M230 297 L280 405 M0 352 L120 350 L230 325 L300 290 L370 262 L440 265 L500 245 L540 245 L570 270 L690 285 L720 250 L745 205 L780 185 L870 170 L890 80 L960 50 L1040 20 L1080 30 M720 290 L760 330 L870 360 L900 380 L1000 400 M690 285 a14 14 0 1 1 28 0 a14 14 0 1 1 -28 0 M870 170 L940 185 L1020 140 L1080 115 M975 50 L1020 140 L1030 300 L1040 460 M510 330 L440 345 L360 410 L300 470 L300 560 M610 290 V350 L690 365 L740 365 L760 335 M610 350 L600 500 M0 455 L140 470 L280 500 L480 560 L640 590 M140 470 L180 440 L250 440 M860 360 L850 440 M560 430 L575 470 L570 600 M780 440 L790 520 L820 560 M680 440 L760 430 L940 460 M880 180 L870 240 L710 290 M910 340 V260 L1000 215 H1080 M120 350 L110 300 M130 480 V540"/>
                </g>
            </g>

            <use href="#main-roads" class="road-casing"/>
            <use href="#main-roads" class="road-fill"/>

            <g class="road-name">
                <text transform="translate(12 73) rotate(14)">A40</text>
                <text transform="translate(164 108) rotate(8)">A40</text>
                <text transform="translate(275 138) rotate(21)">A40</text>
                <text transform="translate(507 -3) rotate(40)">nchley Rd</text>
                <text transform="translate(488 157) rotate(16)">Westway</text>
                <text transform="translate(416 185) rotate(-14)">Westway</text>
                <text transform="translate(767 65) rotate(87)">A1</text>
                <text transform="translate(854 9) rotate(-88)">A1</text>
                <text transform="translate(849 92) rotate(-88)">A10</text>
                <text transform="translate(774 115) rotate(20)">A501</text>
                <text transform="translate(998 130) rotate(-14)">A11</text>
                <text transform="translate(878 175) rotate(-17)">A11</text>
                <text transform="translate(1032 122) rotate(83)">A12</text>
                <text transform="translate(925 193) rotate(5)">A13</text>
                <text transform="translate(1404 104) rotate(8)">A13</text>
                <text transform="translate(1313 123) rotate(-15)">Alfreds Way</text>
                <text transform="translate(1231 165) rotate(-28)">Newham Way</text>
                <text transform="translate(1281 188) rotate(-78)">A1020</text>
                <text transform="translate(895 212) rotate(-2)">A1203</text>
                <text transform="translate(985 206) rotate(28)">A1261</text>
                <text transform="translate(225 241) rotate(50)">A406</text>
                <text transform="translate(217 398) rotate(-80)">A307</text>
                <text transform="translate(476 282) rotate(47)">A3220</text>
                <text transform="translate(549 316) rotate(-48)">A308</text>
                <text transform="translate(587 332) rotate(-8)">A3212</text>
                <text transform="translate(637 399) rotate(-78)">A3216</text>
                <text transform="translate(862 325) rotate(28)">A2</text>
                <text transform="translate(728 366) rotate(-62)">A3</text>
                <text transform="translate(745 413) rotate(-88)">Brixton Rd</text>
                <text transform="translate(1114 380) rotate(-8)">A2</text>
                <text transform="translate(1235 380) rotate(-75)">A205</text>
            </g>
            <g class="river-name">
                <text transform="translate(363 307) rotate(4)">Theems</text>
                <text transform="translate(880 248) rotate(-10)">Theems</text>
                <text transform="translate(1118 265) rotate(14)">Theems</text>
                <text transform="translate(134 413) rotate(-62)">Theems</text>
            </g>
            <g class="shield">
                <rect x="9" y="283" width="18" height="13" rx="1"/>
                <rect x="165" y="291" width="18" height="13" rx="1"/>
                <text x="11" y="293">M4</text>
                <text x="167" y="301">M4</text>
            </g>
            <g class="place">
                <text x="150" y="22" class="town">Wembley</text>
                <text x="0" y="40">lt</text>
                <text x="291" y="12" class="suburb">Brent Park</text>
                <text x="31" y="109" class="suburb">Greenford</text>
                <text x="101" y="107" class="suburb">Perivale</text>
                <text x="138" y="323" class="suburb">Brentford</text>
                <text x="1268" y="87" class="suburb poi">Barking</text>
                <text x="992" y="274" class="suburb">Isle of Dogs</text>
                <text x="419" y="203" class="poi">Holland Park</text>
                <text x="572" y="105" class="poi">The Regent's</text>
                <text x="598" y="119" class="poi">Park</text>
                <text x="626" y="247" class="poi">St James's Park</text>
                <text x="568" y="356" class="poi">Battersea Park</text>
                <text x="166" y="350" class="poi">Royal Botanic</text>
                <text x="165" y="364" class="poi">Gardens, Kew</text>
                <text x="1040" y="359" class="poi">Greenwich</text>
                <text x="1059" y="373" class="poi">Park</text>
                <text x="808" y="147" class="venue">Barbican Centre</text>
                <text x="562" y="146" class="closed">The British Museum</text>
                <text x="604" y="157" class="closed note">Tijdelijk gesloten</text>
                <text x="965" y="317" class="closed">Cutty Sark</text>
                <text x="946" y="328" class="closed note">Tijdelijk gesloten</text>
            </g>
            <g class="area">
                <text x="592" y="48">CHALK FARM</text>
                <text x="614" y="73">CAMDEN TOWN</text>
                <text x="375" y="95">KENSAL GREEN</text>
                <text x="164" y="194">EALING</text>
                <text x="252" y="217">ACTON</text>
                <text x="346" y="202">WHITE CITY</text>
                <text x="382" y="227">SHEPHERD'S</text>
                <text x="401" y="236">BUSH</text>
                <text x="472" y="251">KENSINGTON</text>
                <text x="525" y="181">PADDINGTON</text>
                <text x="615" y="202">MAYFAIR</text>
                <text x="636" y="268">WESTMINSTER</text>
                <text x="638" y="299">PIMLICO</text>
                <text x="687" y="321">VAUXHALL</text>
                <text x="265" y="314">CHISWICK</text>
                <text x="460" y="362">FULHAM</text>
                <text x="556" y="386">BATTERSEA</text>
                <text x="763" y="377">CAMBERWELL</text>
                <text x="847" y="395">PECKHAM</text>
                <text x="842" y="187">WHITECHAPEL</text>
                <text x="1023" y="198">POPLAR</text>
                <text x="959" y="231">CANARY WHARF</text>
                <text x="1237" y="305">WOOLWICH</text>
                <text x="30" y="340" class="station">OSTERLEY</text>
                <text x="-4" y="330" class="station">N</text>
                <text x="998" y="37" class="district">STRATFORD</text>
                <text x="773" y="193" class="district">CITY OF</text>
                <text x="771" y="208" class="district">LONDON</text>
                <text x="688" y="288" class="district">LAMBETH</text>
                <text x="661" y="226" class="city">Londen</text>
            </g>

            <!-- points of interest -->
            <g transform="translate(699 142)"><use href="#poi" fill="#383838"/><use href="#museum"/></g>
            <g transform="translate(1041 313)"><use href="#poi" fill="#383838"/><use href="#museum"/></g>
            <g transform="translate(795 138)"><use href="#poi" fill="#1b3438"/><path fill="#6f8285" d="M-6 -2 q3 2 6 0 v4 q-3 4 -6 0z M0 -6 q3 2 5 0 v4 q-1 3 -3 2 v-3 h-2z"/></g>
            <g transform="translate(475 218)"><use href="#poi" fill="#1c3423"/><path fill="#74857a" d="M0 -7 L3 -3 H2 L4 0 H2.500 L5 3 H1 V5 H-1 V3 H-5 L-2.500 0 H-4 L-2 -3 H-3Z"/></g>

            <g class="watermark">
                <text x="-187" y="89">For development purposes only</text>
                <text x="69" y="89">For development purposes only</text>
                <text x="325" y="89">For development purposes only</text>
                <text x="581" y="89">For development purposes only</text>
                <text x="837" y="89">For development purposes only</text>
                <text x="1093" y="89">For development purposes only</text>
                <text x="1349" y="89">For development purposes only</text>
                <text x="-187" y="345">For development purposes only</text>
                <text x="69" y="345">For development purposes only</text>
                <text x="325" y="345">For development purposes only</text>
                <text x="581" y="345">For development purposes only</text>
                <text x="837" y="345">For development purposes only</text>
                <text x="1093" y="345">For development purposes only</text>
                <text x="1349" y="345">For development purposes only</text>
            </g>

            <g transform="translate(719.500 170.500)">
                <path fill="#ea4335" stroke="#fff" d="M0 29 C-1.500 29 -1.500 27 -1.500 25 C-3 14 -13 10 -13 0 A13 13 0 0 1 13 0 C13 10 3 14 1.500 25 C1.500 27 1.500 29 0 29Z"/>
                <circle r="4.500" fill="#811411"/>
            </g>
        </svg>

        <a class="google" href="#" aria-label="Google"><span class="g-blue">G</span><span class="g-red">o</span><span class="g-yellow">o</span><span class="g-blue">g</span><span class="g-green">l</span><span class="g-red">e</span></a>
        <button class="map-btn fullscreen" type="button" aria-label="Fullscreen">
            <svg width="18" height="18" viewBox="0 0 18 18" fill="none" stroke="#666" stroke-width="2" aria-hidden="true"><path d="M1 6 V1 H6 M12 1 H17 V6 M17 12 V17 H12 M6 17 H1 V12"/></svg>
        </button>
        <div class="zoom">
            <button class="map-btn" type="button" aria-label="Zoom in">
                <svg width="18" height="18" viewBox="0 0 18 18" fill="#666" aria-hidden="true"><path d="M7 0 H11 V7 H18 V11 H11 V18 H7 V11 H0 V7 H7Z"/></svg>
            </button>
            <button class="map-btn" type="button" aria-label="Zoom out">
                <svg width="18" height="18" viewBox="0 0 18 18" fill="#666" aria-hidden="true"><path d="M0 7 H18 V11 H0Z"/></svg>
            </button>
        </div>
        <div class="attribution">
            <span>Kaartgegevens ©2021</span>
            <a href="#">Gebruiksvoorwaarden</a>
            <a href="#">Een kaartfout rapporteren</a>
        </div>
    </section>

    <main class="container contact">
        <h2>Get in touch</h2>
        <form>
            <label for="name">Name</label>
            <input type="text" id="name" name="name">
        </form>
    </main>
</body>
</html>
```
FILE: styles.css
```css
* {
    box-sizing: border-box;
}
body {
    margin: 0;
    font-family: Lato, "Liberation Sans", sans-serif;
    font-weight: 700;
    color: #0f0a4b;
    background-color: #fff;
}
a {
    color: inherit;
    text-decoration: none;
}
h1, h2 {
    margin: 0;
    font-weight: 700;
}
.container {
    width: 100%;
    max-width: 1264px;
    margin: 0 auto;
    padding-left: 24px;
    padding-right: 24px;
}

/* hero */
.hero {
    position: relative;
    background-color: #0f0a4b;
    color: #fff;
    overflow: hidden;
}
.hero-shapes {
    position: absolute;
    top: 0;
    left: 0;
    width: 100%;
    height: 100%;
    fill: #29235c;
}
.navbar {
    position: relative;
    display: flex;
    align-items: center;
    height: 80px;
}
.logo {
    display: flex;
    align-items: center;
    gap: 9px;
    margin-right: auto;
}
.logo-text {
    font-size: 33px;
    line-height: 32px;
    font-weight: 400;
}
.logo-text b {
    font-weight: 700;
}
nav {
    display: flex;
    gap: 32px;
    font-size: 17px;
    line-height: 24px;
}
nav a {
    display: flex;
    align-items: center;
    gap: 6px;
}
.chevron {
    width: 12px;
    height: 8px;
    margin-right: 6px;
    fill: none;
    stroke: #fff;
    stroke-width: 3;
}
.actions {
    display: flex;
    gap: 16px;
    margin-left: 46px;
}
.btn {
    padding: 11px 24px;
    font-size: 18px;
    line-height: 24px;
    background-color: #25266b;
}
.btn-primary {
    background-color: #175cff;
}
.title {
    position: relative;
    padding-top: 114px;
    padding-bottom: 80px;
}
h1 {
    font-size: 51px;
    line-height: 60px;
}

/* map */
.map {
    position: relative;
    height: 400px;
    overflow: hidden;
    font-family: Roboto, "Liberation Sans", sans-serif;
    font-weight: 400;
}
.map-canvas {
    display: block;
    width: 100%;
    height: 100%;
}
.park { fill: #4a6349; }
.soil { fill: #645d53; }
.shops { fill: #806e3b; }
.hospital { fill: #86463f; }
.water { fill: #32597a; }
.stream, .thames, .docks, .rail, .street {
    fill: none;
    stroke: #32597a;
    stroke-linejoin: round;
}
.stream { stroke-width: 3; }
.stream.wide { stroke-width: 7; }
.docks { stroke-width: 11; }
.thames { stroke-width: 26; }
.thames.narrow { stroke-width: 17; }
.thames.wide { stroke-width: 44; }
.thames.broad { stroke-width: 36; }
.rail {
    stroke: #56575b;
    stroke-width: 3;
}
.rail.wide { stroke-width: 7; }
.street {
    stroke: #686868;
    stroke-width: 5;
}
.road-casing, .road-fill {
    fill: none;
    stroke-linejoin: round;
}
.road-casing {
    stroke: #5b5036;
    stroke-width: 13;
}
.road-fill {
    stroke: #806d2f;
    stroke-width: 8;
}
.map-canvas text {
    paint-order: stroke;
    stroke: #5e5e5e;
    stroke-width: 2px;
    stroke-linejoin: round;
}
.road-name {
    font-size: 11px;
    fill: #211d12;
}
.river-name {
    font-size: 10px;
    fill: #1d374f;
}
.map-canvas .river-name text, .map-canvas .shield text {
    stroke: none;
}
.shield {
    font-size: 10px;
    font-weight: 500;
    fill: #2f3149;
}
.shield text {
    fill: #858594;
}
.place {
    font-size: 14px;
    fill: #222;
}
.place .town { font-size: 15px; }
.place .suburb { font-size: 13px; }
.place .poi { fill: #1c2e22; }
.place .venue { fill: #1b2f36; }
.place .closed { fill: #2e2e2e; }
.place .note { font-size: 11px; }
.area {
    font-size: 9px;
    font-weight: 700;
    letter-spacing: 1px;
    fill: #34363b;
}
.area .station {
    letter-spacing: 0;
    fill: #1f1f25;
}
.area .district {
    font-size: 15px;
    fill: #282a2d;
}
.area .city {
    font-size: 20px;
    font-weight: 500;
    fill: #1c1c1c;
}
.map-canvas .watermark text {
    font-family: "Liberation Sans", sans-serif;
    font-size: 15px;
    fill: #a8a8a8;
    stroke: none;
}
.google {
    position: absolute;
    left: 5px;
    bottom: 0;
    font-family: Lato, sans-serif;
    font-size: 21px;
    line-height: 28px;
    font-weight: 700;
    -webkit-text-stroke: 2px #c8c8c8;
    paint-order: stroke;
}
.g-blue { color: #4285f4; }
.g-red { color: #ea4335; }
.g-yellow { color: #fbbc05; }
.g-green { color: #34a853; }
.map-btn {
    display: flex;
    align-items: center;
    justify-content: center;
    width: 40px;
    height: 40px;
    padding: 0;
    border: 0;
    border-radius: 2px;
    background-color: #fff;
}
.fullscreen {
    position: absolute;
    top: 10px;
    right: 10px;
    box-shadow: 0 1px 4px rgba(0, 0, 0, 0.3);
}
.zoom {
    position: absolute;
    right: 10px;
    bottom: 24px;
    border-radius: 2px;
    background-color: #fff;
    box-shadow: 0 1px 4px rgba(0, 0, 0, 0.3);
}
.zoom .map-btn + .map-btn::before {
    content: "";
    position: absolute;
    top: 40px;
    left: 5px;
    width: 30px;
    height: 1px;
    background-color: #e6e6e6;
}
.zoom .map-btn + .map-btn {
    margin-top: 1px;
}
.attribution {
    position: absolute;
    right: 0;
    bottom: 0;
    display: flex;
    font-size: 10px;
    line-height: 14px;
    color: #000;
    background-color: #c8c8c8;
}
.attribution > * {
    padding: 0 6px 0 5px;
}
.attribution a {
    font-weight: 700;
    border-left: 1px solid #555;
}

/* contact form */
.contact {
    display: grid;
    grid-template-columns: 1fr 1fr;
    gap: 80px;
    padding-top: 116px;
}
h2 {
    font-size: 37px;
    line-height: 48px;
}
form {
    padding-top: 3px;
}
label {
    display: block;
    font-size: 17px;
    line-height: 24px;
    margin-bottom: 9px;
}
input {
    display: block;
    width: 100%;
    height: 56px;
    padding: 0 16px;
    border: 0;
    border-radius: 4px;
    font: inherit;
    color: inherit;
    background-color: #f3f7fa;
}
```
